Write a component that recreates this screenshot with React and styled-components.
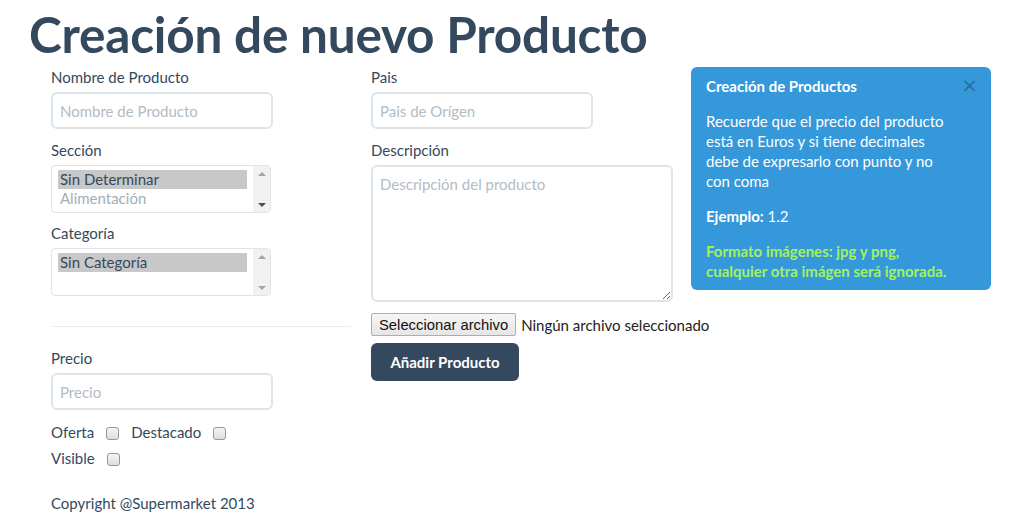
import React from "react";
import styled, { createGlobalStyle } from "styled-components";

const Global = createGlobalStyle`
  html, body { margin: 0; padding: 0; background: #fff; }
  body { font-family: Lato, "Open Sans", sans-serif; color: #34495e; font-size: 15px; line-height: 20px; }
  * { box-sizing: border-box; }
`;

const Page = styled.div`
  padding: 7px 0 0 31px;
`;

const Title = styled.h1`
  margin: 0 0 0 -2px;
  font-family: Lato, sans-serif;
  font-weight: 700;
  font-size: 49.5px;
  line-height: 55px;
  color: #34495e;
  letter-spacing: -0.2px;
`;

const Row = styled.div`
  display: grid;
  grid-template-columns: 300px 300px 300px;
  column-gap: 20px;
  margin: 5px 0 0 20px;
  align-items: start;
`;

const Col = styled.div`
  display: flex;
  flex-direction: column;
`;

const Group = styled.div`
  margin-bottom: ${(p) => p.$mb ?? 11}px;
`;

const Label = styled.label`
  display: block;
  font-size: 15px;
  line-height: 20px;
  margin-bottom: 5px;
  color: #34495e;
`;

const Input = styled.input`
  display: block;
  width: ${(p) => p.$w || 222}px;
  height: 37px;
  border: 2px solid #dce4ec;
  border-radius: 6px;
  padding: 0 7px;
  font-family: Lato, sans-serif;
  font-size: 15px;
  color: #34495e;
  outline: none;
  &::placeholder { color: #b2bcc5; }
`;

const Textarea = styled.textarea`
  display: block;
  width: 302px;
  height: 137px;
  border: 2px solid #dce4ec;
  border-radius: 6px;
  padding: 7px 7px;
  font-family: Lato, sans-serif;
  font-size: 15px;
  line-height: 20px;
  color: #34495e;
  outline: none;
  resize: vertical;
  &::placeholder { color: #b2bcc5; }
`;

const Listbox = styled.div`
  width: 220px;
  height: 48px;
  border: 1px solid #dce4ec;
  border-radius: 4px;
  display: flex;
  overflow: hidden;
`;

const Options = styled.div`
  flex: 1;
  padding: 4px 0 0 6px;
`;

const Option = styled.div`
  height: 19px;
  line-height: 19px;
  padding-left: 2px;
  font-size: 15px;
  color: ${(p) => (p.$selected ? "#34495e" : "#a3adb6")};
  background: ${(p) => (p.$selected ? "#c8c8c8" : "transparent")};
  margin-right: 6px;
  white-space: nowrap;
`;

const Scrollbar = styled.div`
  width: 17px;
  background: #f1f1f1;
  display: flex;
  flex-direction: column;
  justify-content: space-between;
  align-items: center;
  padding: 6px 0 5px;
`;

const Arrow = styled.span`
  width: 0;
  height: 0;
  border-left: 4px solid transparent;
  border-right: 4px solid transparent;
  ${(p) =>
    p.$down
      ? `border-top: 4px solid ${p.$dark ? "#505050" : "#a3a3a3"};`
      : `border-bottom: 4px solid #a3a3a3;`}
`;

const Divider = styled.hr`
  margin: 30px 0 21px;
  border: 0;
  border-top: 1px solid #eceff1;
  width: 300px;
`;

const CheckLine = styled.div`
  display: flex;
  align-items: center;
  line-height: 26px;
  height: 26px;
  font-size: 15px;
  margin-top: ${(p) => p.$mt || 0}px;
`;

const CheckLabel = styled.span`
  display: inline-flex;
  align-items: center;
  margin-right: 12px;
`;

const Box = styled.span`
  display: inline-block;
  width: 13px;
  height: 13px;
  margin-left: 12px;
  margin-top: 3px;
  border: 1px solid #979797;
  border-radius: 3px;
  background: linear-gradient(#f4f4f4, #dedede);
`;

const Copyright = styled.p`
  margin: 22px 0 0;
  line-height: 20px;
  font-size: 15px;
`;

const FileRow = styled.div`
  display: flex;
  align-items: center;
  width: max-content;
  height: 23px;
  margin-top: 11px;
  white-space: nowrap;
`;

const FileButton = styled.span`
  display: inline-flex;
  align-items: center;
  flex-shrink: 0;
  height: 23px;
  padding: 0 7px 0 7px;
  border: 1px solid #adadad;
  border-radius: 2px;
  background: linear-gradient(#f5f5f5, #e6e6e6);
  font-family: "Liberation Sans", Arial, sans-serif;
  font-size: 14.8px;
  color: #111;
`;

const FileText = styled.span`
  margin-left: 5px;
  font-size: 15px;
  color: #222;
`;

const PrimaryButton = styled.button`
  margin-top: 7px;
  width: 148px;
  height: 38px;
  border: 0;
  border-radius: 6px;
  background: #34495e;
  color: #fff;
  font-family: Lato, sans-serif;
  font-weight: 700;
  font-size: 15px;
  padding: 0;
`;

const Alert = styled.div`
  background: #3498db;
  border-radius: 6px;
  padding: 9px 16px 9px 15px;
  color: #fff;
  font-size: 15px;
  line-height: 20px;
`;

const AlertHead = styled.div`
  display: flex;
  justify-content: space-between;
  align-items: center;
`;

const AlertTitle = styled.h4`
  margin: 0;
  font-size: 15px;
  line-height: 20px;
  font-weight: 700;
`;

const Close = styled.span`
  font-size: 20px;
  line-height: 20px;
  color: #2b6ea0;
  font-family: "DejaVu Sans", sans-serif;
  margin: -3px -3px 0 0;
`;

const AlertText = styled.p`
  margin: 15px 0 0;
  padding-right: 20px;
  color: ${(p) => (p.$green ? "#a3f25c" : "#fff")};
  font-weight: ${(p) => (p.$green ? 700 : 400)};
`;

function ListBox({ options, selected, scrollable }) {
  return (
    <Listbox role="listbox">
      <Options>
        {options.map((o) => (
          <Option key={o} $selected={o === selected}>
            {o}
          </Option>
        ))}
      </Options>
      <Scrollbar>
        <Arrow />
        <Arrow $down $dark={scrollable} />
      </Scrollbar>
    </Listbox>
  );
}

export default function App() {
  return (
    <>
      <Global />
      <Page>
        <Title>Creación de nuevo Producto</Title>
        <Row>
          <Col>
            <Group>
              <Label>Nombre de Producto</Label>
              <Input placeholder="Nombre de Producto" />
            </Group>
            <Group $mb={10}>
              <Label>Sección</Label>
              <ListBox
                options={["Sin Determinar", "Alimentación"]}
                selected="Sin Determinar"
                scrollable
              />
            </Group>
            <Group $mb={0}>
              <Label>Categoría</Label>
              <ListBox options={["Sin Categoría"]} selected="Sin Categoría" />
            </Group>
            <Divider />
            <Group $mb={0}>
              <Label>Precio</Label>
              <Input placeholder="Precio" />
            </Group>
            <CheckLine $mt={9}>
              <CheckLabel>
                Oferta <Box />
              </CheckLabel>
              <CheckLabel>
                Destacado <Box />
              </CheckLabel>
            </CheckLine>
            <CheckLine>
              <CheckLabel>
                Visible <Box />
              </CheckLabel>
            </CheckLine>
            <Copyright>Copyright @Supermarket 2013</Copyright>
          </Col>
          <Col>
            <Group>
              <Label>Pais</Label>
              <Input placeholder="Pais de Orígen" />
            </Group>
            <Group $mb={0}>
              <Label>Descripción</Label>
              <Textarea placeholder="Descripción del producto" />
            </Group>
            <FileRow>
              <FileButton>Seleccionar archivo</FileButton>
              <FileText>Ningún archivo seleccionado</FileText>
            </FileRow>
            <div>
              <PrimaryButton>Añadir Producto</PrimaryButton>
            </div>
          </Col>
          <Col>
            <Alert>
              <AlertHead>
                <AlertTitle>Creación de Productos</AlertTitle>
                <Close>×</Close>
              </AlertHead>
              <AlertText>
                Recuerde que el precio del producto está en Euros y si tiene
                decimales debe de expresarlo con punto y no con coma
              </AlertText>
              <AlertText>
                <b>Ejemplo:</b> 1.2
              </AlertText>
              <AlertText $green>
                Formato imágenes: jpg y png, cualquier otra imágen será
                ignorada.
              </AlertText>
            </Alert>
          </Col>
        </Row>
      </Page>
    </>
  );
}
